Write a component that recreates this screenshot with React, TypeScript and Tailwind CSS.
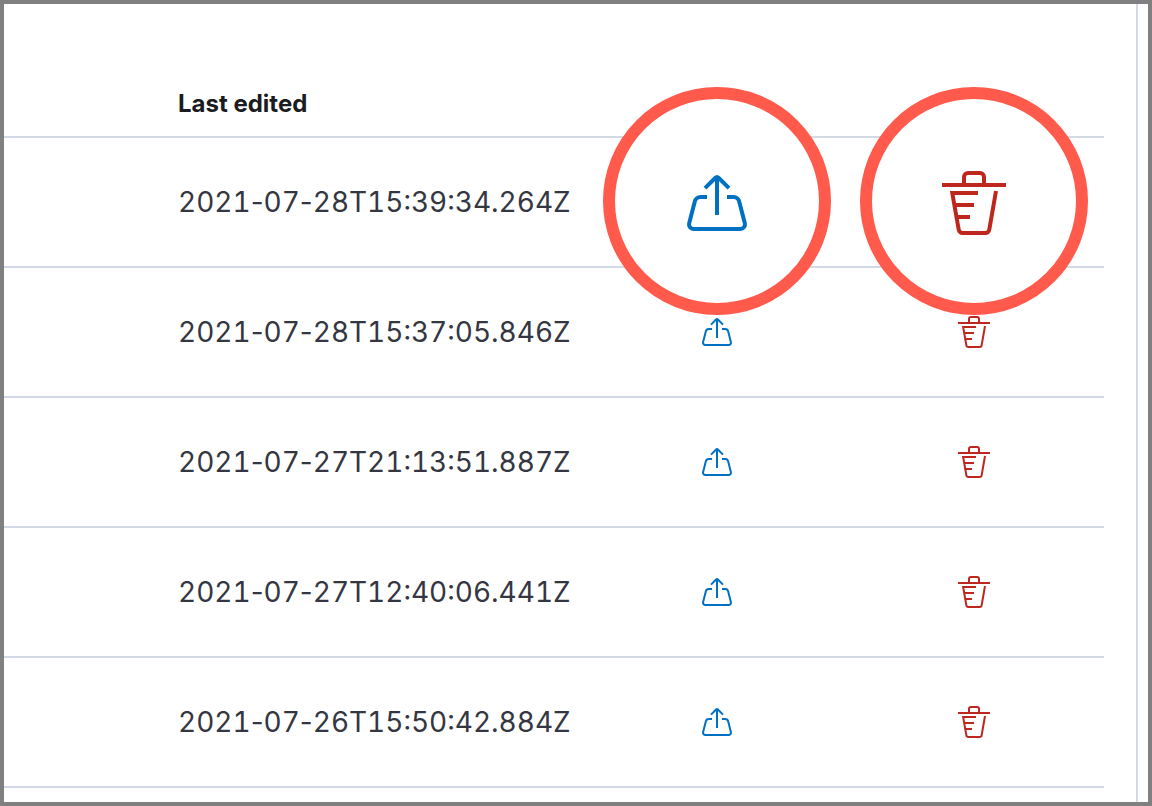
import React from "react";

const rows = [
  { id: 1, lastEdited: "2021-07-28T15:39:34.264Z", highlighted: true },
  { id: 2, lastEdited: "2021-07-28T15:37:05.846Z", highlighted: false },
  { id: 3, lastEdited: "2021-07-27T21:13:51.887Z", highlighted: false },
  { id: 4, lastEdited: "2021-07-27T12:40:06.441Z", highlighted: false },
  { id: 5, lastEdited: "2021-07-26T15:50:42.884Z", highlighted: false },
];

const ExportIcon = ({ className }: { className: string }) => (
  <svg
    viewBox="0 0 16 16"
    fill="none"
    stroke="currentColor"
    className={className}
    aria-hidden="true"
  >
    <path d="M8 11V1.6" />
    <path d="M5 4.3 7.55 1.75a.65.65 0 0 1 .9 0L11 4.3" />
    <path d="M5.5 6.5H3.9a1.5 1.5 0 0 0-1.47 1.18L1.03 13.1a1.15 1.15 0 0 0 1.12 1.4h11.7a1.15 1.15 0 0 0 1.12-1.4l-1.4-5.42A1.5 1.5 0 0 0 12.1 6.5h-1.6" />
  </svg>
);

const TrashIcon = ({ className }: { className: string }) => (
  <svg
    viewBox="0 0 16 16"
    fill="none"
    stroke="currentColor"
    className={className}
    aria-hidden="true"
  >
    <path d="M0 3.5h16" />
    <path d="M5.5 3.5v-2a1 1 0 0 1 1-1h3a1 1 0 0 1 1 1v2" />
    <path d="M9 5.5H2.57l1.6 9.1a1 1 0 0 0 1 .9h5.66a1 1 0 0 0 1-.9L13.5 5" />
    <path d="M3 8.5h5M3.4 11.5H7" />
  </svg>
);

const actions = [
  { name: "Export", Icon: ExportIcon, color: "text-[#0071c2]" },
  { name: "Delete", Icon: TrashIcon, color: "text-[#bd271e]" },
];

// Digits are tabular, the dashes between them keep their own width
const Timestamp = ({ value }: { value: string }) => (
  <time dateTime={value} className="tabular-nums">
    {value.split("-").map((part, i) => (
      <React.Fragment key={i}>
        {i > 0 && <span className="normal-nums">-</span>}
        {part}
      </React.Fragment>
    ))}
  </time>
);

const App: React.FC = () => {
  return (
    <div className="flex min-h-screen border-4 border-[#808080] bg-white font-['Inter',sans-serif]">
      <div className="mr-2.5 flex-1 border-r-2 border-[#d3dae6] pr-8">
        <table className="w-full table-fixed border-separate border-spacing-0">
          <colgroup>
            <col />
            <col className="w-[254px]" />
            <col className="w-[260px]" />
          </colgroup>
          <thead>
            <tr>
              <th
                scope="col"
                className="h-[134px] border-b-2 border-[#d3dae6] pb-4 pl-[174px] text-left align-bottom text-2xl font-bold text-[#1a1c21]"
              >
                Last edited
              </th>
              <td className="border-b-2 border-[#d3dae6]" />
              <td className="border-b-2 border-[#d3dae6]" />
            </tr>
          </thead>
          <tbody>
            {rows.map((row) => (
              <tr key={row.id}>
                <td className="h-[130px] border-b-2 border-[#d3dae6] pl-[174px] text-[28px] text-[#343741]">
                  <Timestamp value={row.lastEdited} />
                </td>
                {actions.map(({ name, Icon, color }) => (
                  <td
                    key={name}
                    className="relative border-b-2 border-[#d3dae6] text-center"
                  >
                    {row.highlighted ? (
                      <button
                        aria-label={name}
                        className={`absolute -top-[51px] left-1/2 z-10 flex size-[228px] -translate-x-1/2 items-center justify-center rounded-full border-12 border-[#ff5a4b] bg-white pt-1 ${color}`}
                      >
                        <Icon className="size-16" />
                      </button>
                    ) : (
                      <button
                        aria-label={name}
                        className={`align-middle ${color}`}
                      >
                        <Icon className="size-8" />
                      </button>
                    )}
                  </td>
                ))}
              </tr>
            ))}
          </tbody>
        </table>
      </div>
    </div>
  );
};

export default App;
